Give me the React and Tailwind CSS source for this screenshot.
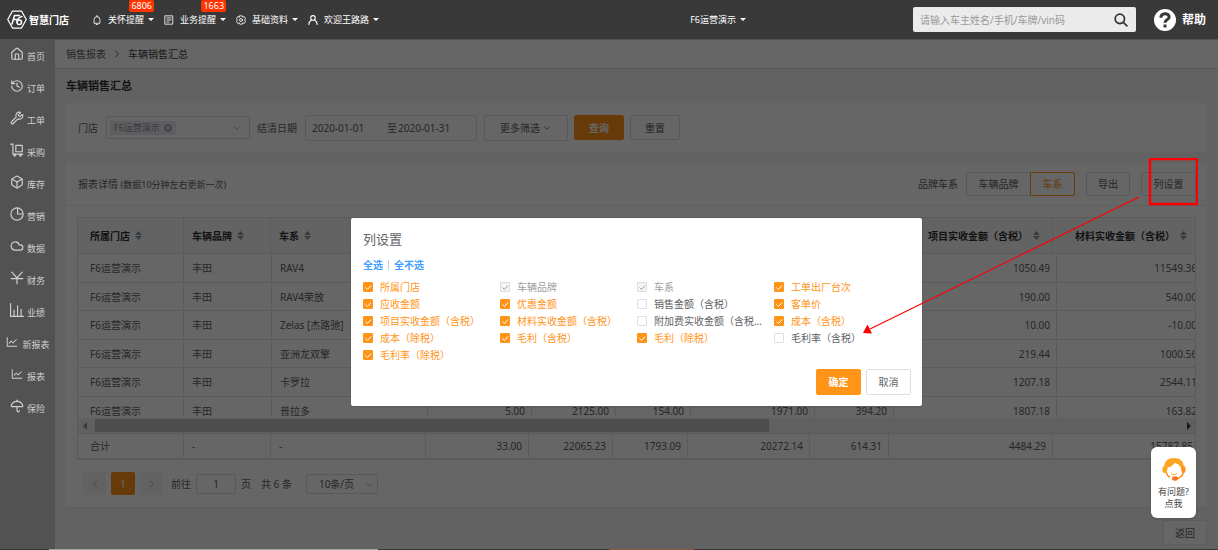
import { useState } from 'react';
import { Box, ChevronDown, ChevronLeft, ChevronRight, Cloud, History, House, Umbrella, Wrench } from 'lucide-react';
import { AiOutlineLineChart } from 'react-icons/ai';

const svgProps = {
  viewBox: '0 0 24 24',
  fill: 'none',
  stroke: 'currentColor',
  strokeWidth: 2,
  strokeLinecap: 'round',
  strokeLinejoin: 'round',
};

function TrolleyIcon(props) {
  return (
    <svg {...svgProps} {...props}>
      <path d="M1 2h4v17h17" />
      <rect x="10" y="4" width="11" height="11" />
      <circle cx="8" cy="21" r="1.5" />
      <circle cx="18" cy="21" r="1.5" />
    </svg>
  );
}

function PieIcon(props) {
  return (
    <svg {...svgProps} {...props}>
      <circle cx="12" cy="12" r="10.5" />
      <path d="M13 2v10h9" />
    </svg>
  );
}

function YenIcon(props) {
  return (
    <svg {...svgProps} {...props}>
      <path d="M3 2l9 10 9-10M12 12v10M2 13h20" />
    </svg>
  );
}

function BarsIcon(props) {
  return (
    <svg {...svgProps} {...props}>
      <path d="M1 1v22h22M7 22V12M13 22V5M19 22V11" />
    </svg>
  );
}

function BellIcon(props) {
  return (
    <svg {...svgProps} {...props}>
      <path d="M12 1v3M5 19V11a7 7 0 0 1 14 0v8zM10 23h4" />
    </svg>
  );
}

function FormIcon(props) {
  return (
    <svg {...svgProps} {...props}>
      <rect x="3" y="2" width="18" height="20" />
      <path d="M7 7h10M7 12h10M7 17h5" />
    </svg>
  );
}

function GearIcon(props) {
  return (
    <svg {...svgProps} {...props}>
      <path d="M9 2h6l1 3 4-1 3 6-3 2 3 3-3 5-4-1-1 3H9l-1-3-4 1-3-5 3-3-3-2 3-6 4 1z" />
      <circle cx="12" cy="12" r="3.5" />
    </svg>
  );
}

function PersonIcon(props) {
  return (
    <svg {...svgProps} strokeWidth="2.5" {...props}>
      <circle cx="12" cy="7" r="5.5" />
      <path d="M2 23c0-6 3-9 6-11M22 23c0-6-3-9-6-11" />
    </svg>
  );
}

function Logo() {
  return (
    <svg viewBox="0 0 40 38" className="h-[19px] w-5" fill="none" stroke="#fff" strokeLinejoin="round" strokeLinecap="round">
      <path d="M11 2h18l9.500 17L29 36H11L1.500 19z" strokeWidth="2.5" />
      <path d="M10 28l5-17h10M13 19h6M30 13c-6 1-9 5-10 11" strokeWidth="3" />
      <circle cx="24.500" cy="24.500" r="4.500" strokeWidth="3" />
    </svg>
  );
}

const menu = [
  { label: '首页', Icon: House },
  { label: '订单', Icon: History },
  { label: '工单', Icon: Wrench },
  { label: '采购', Icon: TrolleyIcon },
  { label: '库存', Icon: Box },
  { label: '营销', Icon: PieIcon },
  { label: '数据', Icon: Cloud },
  { label: '财务', Icon: YenIcon },
  { label: '业绩', Icon: BarsIcon },
  { label: '新报表', Icon: AiOutlineLineChart },
  { label: '报表', Icon: AiOutlineLineChart },
  { label: '保险', Icon: Umbrella },
];

const topLinks = [
  { label: '关怀提醒', Icon: BellIcon, badge: '6806' },
  { label: '业务提醒', Icon: FormIcon, badge: '1663' },
  { label: '基础资料', Icon: GearIcon },
  { label: '欢迎王路路', Icon: PersonIcon },
];

const rows = [
  ['F6运营演示', '丰田', 'RAV4', '', '', '', '', '', '1050.49', '11549.36'],
  ['F6运营演示', '丰田', 'RAV4荣放', '', '', '', '', '', '190.00', '540.00'],
  ['F6运营演示', '丰田', 'Zelas [杰路驰]', '', '', '', '', '', '10.00', '-10.00'],
  ['F6运营演示', '丰田', '亚洲龙双擎', '', '', '', '', '', '219.44', '1000.56'],
  ['F6运营演示', '丰田', '卡罗拉', '', '', '', '', '', '1207.18', '2544.11'],
  ['F6运营演示', '丰田', '普拉多', '5.00', '2125.00', '154.00', '1971.00', '394.20', '1807.18', '163.82'],
];

const headings = ['所属门店', '车辆品牌', '车系', '', '', '', '', '', '项目实收金额（含税）', '材料实收金额（含税）'];
const totals = ['合计', '-', '-', '33.00', '22065.23', '1793.09', '20272.14', '614.31', '4484.29', '15787.85'];

const options = [
  { label: '所属门店', checked: true },
  { label: '车辆品牌', checked: true, disabled: true },
  { label: '车系', checked: true, disabled: true },
  { label: '工单出厂台次', checked: true },
  { label: '应收金额', checked: true },
  { label: '优惠金额', checked: true },
  { label: '销售金额（含税）', checked: false },
  { label: '客单价', checked: true },
  { label: '项目实收金额（含税）', checked: true },
  { label: '材料实收金额（含税）', checked: true },
  { label: '附加费实收金额（含税）', checked: false },
  { label: '成本（含税）', checked: true },
  { label: '成本（除税）', checked: true },
  { label: '毛利（含税）', checked: true },
  { label: '毛利（除税）', checked: true },
  { label: '毛利率（含税）', checked: false },
  { label: '毛利率（除税）', checked: true },
];

function Caret() {
  return <span className="border-x-3 border-t-3 border-x-transparent border-t-white" />;
}

function Header() {
  return (
    <header className="flex h-10 items-center border-b border-[#525252] bg-[#393939] pr-3 pl-[7px] text-white">
      <div className="flex items-center gap-[2px] text-[10px] leading-4 font-bold">
        <Logo />
        智慧门店
      </div>
      <nav className="ml-[23px] flex flex-1 items-center gap-[10px]">
        {topLinks.map(({ label, Icon, badge }) => (
          <a key={label} href="#" className="relative flex items-center text-[9px] leading-4">
            <Icon className="mr-[6px] size-[10px]" />
            <span className="mr-1">{label}</span>
            <Caret />
            {badge && (
              <span className="absolute -top-3 right-0 rounded-xs bg-[#ff3300] px-[2px] text-[9px] leading-[12px]">
                {badge}
              </span>
            )}
          </a>
        ))}
      </nav>
      <button className="mr-[167px] flex items-center gap-1 text-[9px] leading-4">
        F6运营演示
        <Caret />
      </button>
      <div className="flex h-[25px] w-[223px] items-center rounded-xs bg-[#ebebeb] pr-2 pl-[7px]">
        <input
          aria-label="搜索"
          placeholder="请输入车主姓名/手机/车牌/vin码"
          className="min-w-0 flex-1 text-[10px] leading-4 text-[#333] outline-none placeholder:text-[#999]"
        />
        <svg viewBox="0 0 24 24" className="size-[14px]" fill="none" stroke="#333" strokeWidth="3">
          <circle cx="10" cy="10" r="8" />
          <path d="M16 16l7 7" />
        </svg>
      </div>
      <a href="#" className="ml-[18px] flex items-center gap-[6px] text-xs font-bold">
        <span className="flex size-[22px] items-center justify-center rounded-full bg-white text-[#393939]">
          <svg viewBox="0 0 24 24" className="size-[18px]" fill="none" stroke="currentColor" strokeWidth="4">
            <path d="M6.500 9c0-7 11-7 11-1 0 4-5.500 3.500-5.500 7.500M12 18v4" />
          </svg>
        </span>
        帮助
      </a>
    </header>
  );
}

function Sidebar() {
  return (
    <nav className="w-[55px] shrink-0 bg-[#525252] text-[9px] text-[#cfcfcf]">
      {menu.map(({ label, Icon }) => (
        <a key={label} href="#" className="flex h-8 items-center justify-center gap-[3px] leading-4">
          <Icon className="mb-1 size-[14px] shrink-0" />
          <span className="pt-px">{label}</span>
        </a>
      ))}
    </nav>
  );
}

function Button({ className = '', children }) {
  return (
    <button className={`flex items-center justify-center rounded-xs border text-[10px] leading-4 ${className}`}>
      {children}
    </button>
  );
}

function Filters() {
  return (
    <section className="flex h-[49px] items-center bg-white px-3">
      <span>门店</span>
      <div className="ml-2 flex h-[23px] w-[144px] items-center justify-between rounded-xs border border-[#dcdfe6] pr-[7px] pl-[3px]">
        <span className="flex h-[14px] items-center gap-1 rounded-xs bg-[#ebecf0] px-1 text-[9px] leading-3 text-[#909399]">
          F6运营演示
          <button aria-label="移除" className="size-2 rounded-full bg-[#a8abb2] text-[8px] leading-2 text-white">×</button>
        </span>
        <ChevronDown className="size-[10px] text-[#a8abb2]" />
      </div>
      <span className="mr-2 ml-[7px]">结清日期</span>
      <div className="flex h-[26px] w-[172px] items-center rounded-xs border border-[#dcdfe6] px-[6px]">
        <input aria-label="开始日期" defaultValue="2020-01-01" className="w-[75px] outline-none" />
        至
        <input aria-label="结束日期" defaultValue="2020-01-31" className="w-[64px] pl-px outline-none" />
      </div>
      <Button className="ml-[7px] h-[26px] w-[84px] gap-[2px] border-[#dcdfe6]">
        更多筛选
        <ChevronDown className="size-[10px]" />
      </Button>
      <Button className="ml-[6px] h-[25px] w-[50px] border-[#ff9417] bg-[#ff9417] font-bold text-white">查询</Button>
      <Button className="ml-[6px] h-[25px] w-[50px] border-[#dcdfe6]">重置</Button>
    </section>
  );
}

function SortArrows() {
  return (
    <svg viewBox="0 0 7 9" className="h-[9px] w-[7px] text-[#909399]" fill="currentColor">
      <path d="M3.500 0L7 4H0zM3.500 9L0 5h7z" />
    </svg>
  );
}

function HeadCols() {
  return (
    <colgroup>
      <col className="w-[106px]" />
      <col className="w-[87px]" />
      <col className="w-[155px]" />
      <col className="w-[103px]" />
      <col className="w-[84px]" />
      <col className="w-[75px]" />
      <col className="w-[122px]" />
      <col className="w-[79px]" />
      <col className="w-[164px]" />
      <col />
    </colgroup>
  );
}

function BodyCols() {
  return (
    <colgroup>
      <col className="w-[106px]" />
      <col className="w-[88px]" />
      <col className="w-[156px]" />
      <col className="w-[104px]" />
      <col className="w-[84px]" />
      <col className="w-[75px]" />
      <col className="w-[124px]" />
      <col className="w-[79px]" />
      <col className="w-[163px]" />
      <col />
    </colgroup>
  );
}

function Cells({ values }) {
  return values.map((value, i) => (
    <td
      key={i}
      className={`border-r border-b border-[#e2e4ea] whitespace-nowrap ${i < 3 ? 'px-2 first:pl-3' : 'pr-[6px] text-right'}`}
    >
      {value}
    </td>
  ));
}

function ReportTable() {
  return (
    <div className="overflow-hidden border border-[#e2e4ea]">
      <table className="w-[calc(100%+5px)] table-fixed border-separate border-spacing-0">
        <HeadCols />
        <thead>
          <tr className="h-9 bg-[#f7f8fa] text-[#303133]">
            {headings.map((title, i) => (
              <th key={i} className="border-r border-b border-[#e2e4ea] px-2 first:pl-3">
                {title && (
                  <span className={`flex items-center gap-[5px] ${i > 3 ? 'justify-end pr-1' : ''}`}>
                    {title}
                    <SortArrows />
                  </span>
                )}
              </th>
            ))}
          </tr>
        </thead>
      </table>
      <div className="h-[164px] overflow-hidden">
        <table className="w-[calc(100%+9px)] table-fixed border-separate border-spacing-0">
          <BodyCols />
          <tbody>
            {rows.map((row) => (
              <tr key={row[2]} className="odd:h-[29px] even:h-7">
                <Cells values={row} />
              </tr>
            ))}
          </tbody>
        </table>
      </div>
      <div className="flex h-4 items-center border-b border-[#e2e4ea] bg-[#f0f0f0] px-1">
        <span className="mr-2 ml-px border-y-4 border-r-4 border-y-transparent border-r-[#8c8c8c]" />
        <span className="h-[13px] w-[674px] bg-[#c1c1c1]" />
        <span className="ml-auto border-y-4 border-l-4 border-y-transparent border-l-[#404040]" />
      </div>
      <table className="w-[calc(100%+5px)] table-fixed border-separate border-spacing-0">
        <HeadCols />
        <tbody>
          <tr className="h-[25px]">
            <Cells values={totals} />
          </tr>
        </tbody>
      </table>
    </div>
  );
}

function Pagination() {
  return (
    <div className="flex items-center pt-3 pb-3 pl-[6px]">
      <button aria-label="上一页" className="flex h-[23px] w-[23px] items-center justify-center rounded-xs bg-[#f4f4f5] text-[#a8abb2]">
        <ChevronLeft className="size-3" />
      </button>
      <button className="mx-[5px] h-[23px] w-6 rounded-xs bg-[#ff9417] text-white">1</button>
      <button aria-label="下一页" className="flex h-[23px] w-[23px] items-center justify-center rounded-xs bg-[#f4f4f5] text-[#a8abb2]">
        <ChevronRight className="size-3" />
      </button>
      <label className="ml-2 flex items-center gap-[5px]">
        前往
        <input defaultValue="1" className="h-5 w-10 rounded-xs border border-[#dcdfe6] text-center outline-none" />
        页
      </label>
      <span className="mr-[14px] ml-[10px]">共 6 条</span>
      <div className="relative">
        <select aria-label="每页条数" className="h-5 w-[72px] appearance-none rounded-xs border border-[#dcdfe6] pl-3 outline-none">
          <option>10条/页</option>
        </select>
        <ChevronDown className="absolute top-[6px] right-1 size-[10px] text-[#a8abb2]" />
      </div>
    </div>
  );
}

function Report() {
  return (
    <section className="mt-[11px] border-b border-[#e8e8e8] bg-white">
      <div className="flex h-[43px] items-center border-b border-[#ededed] pr-[11px] pl-3">
        <h2>
          报表详情 <span className="text-[9px]">(数据10分钟左右更新一次)</span>
        </h2>
        <span className="mr-2 ml-auto">品牌车系</span>
        <Button className="h-6 w-16 rounded-r-none border-r-0 border-[#dcdfe6]">车辆品牌</Button>
        <Button className="h-6 w-[45px] rounded-l-none border-[#ff9417] text-[#ff9417]">车系</Button>
        <Button className="ml-[11px] h-6 w-11 border-[#dcdfe6]">导出</Button>
        <Button className="ml-[11px] h-6 w-[55px] border-[#dcdfe6]">列设置</Button>
      </div>
      <div className="px-[11px] pt-[11px]">
        <ReportTable />
        <Pagination />
      </div>
    </section>
  );
}

function Option({ option, onToggle }) {
  const { label, checked, disabled } = option;
  let color = 'text-[#606266]';
  if (checked) color = 'text-[#ff9417]';
  if (disabled) color = 'text-[#a0a0a0]';

  return (
    <label className={`flex h-[17px] items-center gap-[7px] ${color}`}>
      <span className="relative size-[10px] shrink-0">
        <input
          type="checkbox"
          checked={checked}
          disabled={disabled}
          onChange={onToggle}
          className="block size-[10px] appearance-none rounded-[1px] border border-[#dcdfe6] bg-white checked:border-[#ff9417] checked:bg-[#ff9417] disabled:border-[#dcdcdc] disabled:bg-[#f5f5f5]"
        />
        {checked && (
          <svg
            viewBox="0 0 10 10"
            className={`pointer-events-none absolute inset-0 ${disabled ? 'text-[#a0a0a0]' : 'text-white'}`}
            fill="none"
            stroke="currentColor"
          >
            <path d="M2.500 5.500l2 2 3.500-4" />
          </svg>
        )}
      </span>
      <span className="max-w-[108px] truncate">{label}</span>
    </label>
  );
}

function ColumnDialog() {
  const [items, setItems] = useState(options);

  function setAll(checked) {
    setItems(items.map((item) => (item.disabled ? item : { ...item, checked })));
  }

  function toggle(index) {
    setItems(items.map((item, i) => (i === index ? { ...item, checked: !item.checked } : item)));
  }

  return (
    <div
      role="dialog"
      aria-label="列设置"
      className="w-[571px] self-start rounded-xs bg-white pt-3 pr-[11px] pb-[11px] pl-3 shadow-sm"
    >
      <h2 className="text-[13px] leading-[18px] text-[#606266]">列设置</h2>
      <div className="mt-[9px] mb-[5px] flex items-center gap-[5px] font-bold text-[#409eff]">
        <button onClick={() => setAll(true)}>全选</button>
        <span className="h-[10px] w-px bg-[#ccc]" />
        <button onClick={() => setAll(false)}>全不选</button>
      </div>
      <div className="grid grid-cols-4">
        {items.map((item, i) => (
          <Option key={item.label} option={item} onToggle={() => toggle(i)} />
        ))}
      </div>
      <div className="mt-[6px] flex justify-end gap-[5px]">
        <Button className="h-[26px] w-[45px] border-[#ff9417] bg-[#ff9417] font-bold text-white">确定</Button>
        <Button className="h-[26px] w-[45px] border-[#dcdfe6] text-[#606266]">取消</Button>
      </div>
    </div>
  );
}

function Support() {
  return (
    <button className="absolute right-[22px] bottom-8 flex h-[71px] w-[45px] flex-col items-center rounded-md bg-white pt-[10px] text-[9px] leading-3 text-[#444] shadow">
      <svg viewBox="0 0 24 24" className="mb-[5px] size-6" fill="none">
        <path d="M2.500 13C1 4 6 1 12 1s11 3 9.500 12l-2 1c0-4-2-7-7-8-2 3-4 4-7 4.500L5 15z" fill="#ffa51f" />
        <rect x="0.500" y="9" width="4" height="7" rx="2" fill="#ffa51f" />
        <rect x="19.500" y="9" width="4" height="7" rx="2" fill="#ff8f1a" />
        <path d="M21.500 15c-1 4-3 6-7 6.500M4 15c1 3 2 4.500 4 5.500" stroke="#ff8f1a" strokeWidth="1.500" />
        <ellipse cx="13" cy="21.500" rx="3" ry="2.200" fill="#f4731c" />
        <path d="M9 16.500c2 1.500 4 1.500 6 0" stroke="#ffa51f" />
      </svg>
      <span>有问题?</span>
      <span>点我</span>
    </button>
  );
}

function Callout() {
  return (
    <div className="pointer-events-none absolute top-[158px] right-5 h-[180px] w-[336px]">
      <svg viewBox="0 0 336 180" className="size-full" fill="none" stroke="#f00">
        <rect x="288" y="1" width="47" height="45" strokeWidth="2.5" />
        <path d="M277 39L8 171" strokeWidth="1.200" />
        <path d="M1 175l4.500-8.500L10 175.500z" fill="#f00" stroke="none" />
      </svg>
    </div>
  );
}

export default function App() {
  return (
    <div className="relative flex min-h-screen flex-col overflow-hidden font-['Noto_Sans','Noto_Sans_CJK_SC',sans-serif]">
      <Header />
      <div className="flex flex-1">
        <Sidebar />
        <main className="relative flex-1 bg-[#f5f5f5] text-[10px] leading-4 text-[#606266]">
          <div className="flex h-[29px] items-center gap-[5px] border-b border-[#dcdcdc] bg-white px-[11px]">
            <a href="#">销售报表</a>
            <ChevronRight className="size-3" />
            <span className="text-[#404246]">车辆销售汇总</span>
          </div>
          <div className="px-[11px]">
            <h1 className="py-[9px] text-[11px] font-bold text-[#303133]">车辆销售汇总</h1>
            <Filters />
            <Report />
            <Button className="mt-3 mb-1 ml-auto h-[25px] w-11 border-[#e8e8e8] bg-white">返回</Button>
          </div>
          <div className="absolute inset-0 flex justify-center bg-black/60 pt-[178px]">
            <ColumnDialog />
          </div>
        </main>
      </div>
      <footer className="flex h-px bg-[#3a3538]">
        <span className="ml-[4%] w-[27%] bg-[#a0a0a0]" />
        <span className="ml-[19%] w-[7%] bg-[#8a5a36]" />
      </footer>
      <Support />
      <Callout />
    </div>
  );
}
